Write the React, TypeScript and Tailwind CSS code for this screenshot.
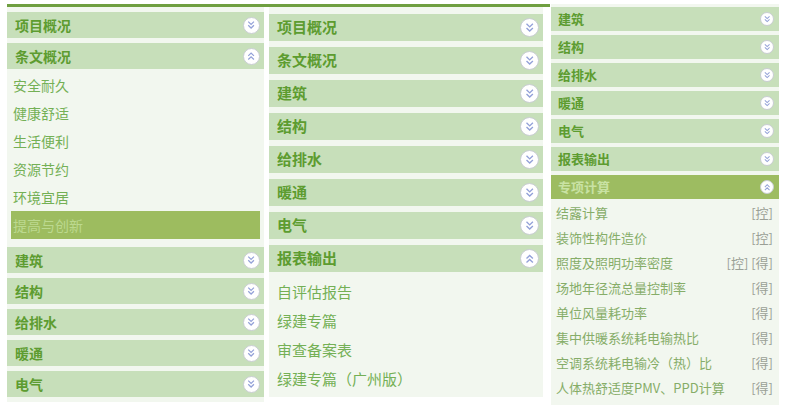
import React from "react";

type Size = "lg" | "md" | "sm";

function Chevrons({ up, d }: { up?: boolean; d: number }) {
  return (
    <span
      className="flex items-center justify-center rounded-full bg-white border border-[#c9cdd2] shrink-0"
      style={{ width: d, height: d }}
    >
      <svg
        width={d * 0.6}
        height={d * 0.6}
        viewBox="0 0 10 10"
        className={up ? "rotate-180" : ""}
      >
        <path d="M2.2 1.6 L5 4.3 L7.8 1.6" fill="none" stroke="#93a1d8" strokeWidth="1.2" />
        <path d="M2.2 5.2 L5 7.9 L7.8 5.2" fill="none" stroke="#93a1d8" strokeWidth="1.2" />
      </svg>
    </span>
  );
}

function Header({
  label,
  size,
  open,
  active,
}: {
  label: string;
  size: Size;
  open?: boolean;
  active?: boolean;
}) {
  const cls = {
    lg: "h-[27px] pl-[8px] pr-[4px] text-[15px]",
    md: "h-[26px] pl-[8px] pr-[4px] text-[14px]",
    sm: "h-[24px] pl-[7px] pr-[5px] text-[13px]",
  }[size];
  const d = size === "lg" ? 19 : size === "md" ? 17 : 14;
  return (
    <div
      className={`flex items-center justify-between font-bold ${cls} ${
        active ? "bg-[#9dbc61] text-[#c9e2a4]" : "bg-[#c7dfba] text-[#5d9c30]"
      }`}
    >
      <span>{label}</span>
      <Chevrons up={open} d={d} />
    </div>
  );
}

const font = { fontFamily: '"Microsoft YaHei", "Noto Sans CJK SC", sans-serif' };

export default function App() {
  const p1Items = ["安全耐久", "健康舒适", "生活便利", "资源节约", "环境宜居", "提高与创新"];
  const p2Items = ["自评估报告", "绿建专篇", "审查备案表", "绿建专篇（广州版）"];
  const p3Items: [string, string][] = [
    ["结露计算", "[控]"],
    ["装饰性构件造价", "[控]"],
    ["照度及照明功率密度", "[控] [得]"],
    ["场地年径流总量控制率", "[得]"],
    ["单位风量耗功率", "[得]"],
    ["集中供暖系统耗电输热比", "[得]"],
    ["空调系统耗电输冷（热）比", "[得]"],
    ["人体热舒适度PMV、PPD计算", "[得]"],
  ];

  return (
    <div className="w-[787px] h-[405px] bg-white flex overflow-hidden" style={font}>
      <div className="ml-[7px] mt-[4px] w-[543px] border-t-[3px] border-[#6f9f40] flex gap-[5px] items-start">
        {/* panel 1 */}
        <div className="w-[257px] bg-[#f2f7ef] pt-[5px] pb-[5px] flex flex-col">
          <div className="flex flex-col gap-[5px]">
            <Header label="项目概况" size="md" />
            <Header label="条文概况" size="md" open />
          </div>
          <div className="pt-[2px] pb-[8px]">
            {p1Items.map((t, i) => (
              <div
                key={t}
                className={`h-[28px] flex items-center text-[14px] ${
                  i === p1Items.length - 1
                    ? "mx-[4px] pl-[2px] bg-[#9dbc5f] text-[#bcd98f]"
                    : "pl-[6px] text-[#74b055]"
                }`}
              >
                {t}
              </div>
            ))}
          </div>
          <div className="flex flex-col gap-[5px]">
            {["建筑", "结构", "给排水", "暖通", "电气"].map((t) => (
              <Header key={t} label={t} size="md" />
            ))}
          </div>
        </div>

        {/* panel 2 */}
        <div className="w-[274px] bg-[#f2f7ef] pt-[7px] pb-[3px] flex flex-col">
          <div className="flex flex-col gap-[6px]">
            {["项目概况", "条文概况", "建筑", "结构", "给排水", "暖通", "电气"].map((t) => (
              <Header key={t} label={t} size="lg" />
            ))}
            <Header label="报表输出" size="lg" open />
          </div>
          <div className="pt-[6px]">
            {p2Items.map((t) => (
              <div key={t} className="h-[29px] flex items-center pl-[8px] text-[15px] text-[#74b055]">
                {t}
              </div>
            ))}
          </div>
        </div>
      </div>

      {/* panel 3 */}
      <div className="ml-[1px] mt-[4px] w-[228px] bg-[#f2f7ef] pt-[3px] pb-[5px] flex flex-col self-start">
        <div className="flex flex-col gap-[4px]">
          {["建筑", "结构", "给排水", "暖通", "电气", "报表输出"].map((t) => (
            <Header key={t} label={t} size="sm" />
          ))}
          <Header label="专项计算" size="sm" open active />
        </div>
        <div className="pt-[1px]">
          {p3Items.map(([t, tag]) => (
            <div
              key={t}
              className="h-[25px] flex items-center justify-between pl-[5px] pr-[6px] text-[13px]"
            >
              <span className="text-[#86ad68]">{t}</span>
              <span className="text-[#9aa096]">{tag}</span>
            </div>
          ))}
        </div>
      </div>
    </div>
  );
}
